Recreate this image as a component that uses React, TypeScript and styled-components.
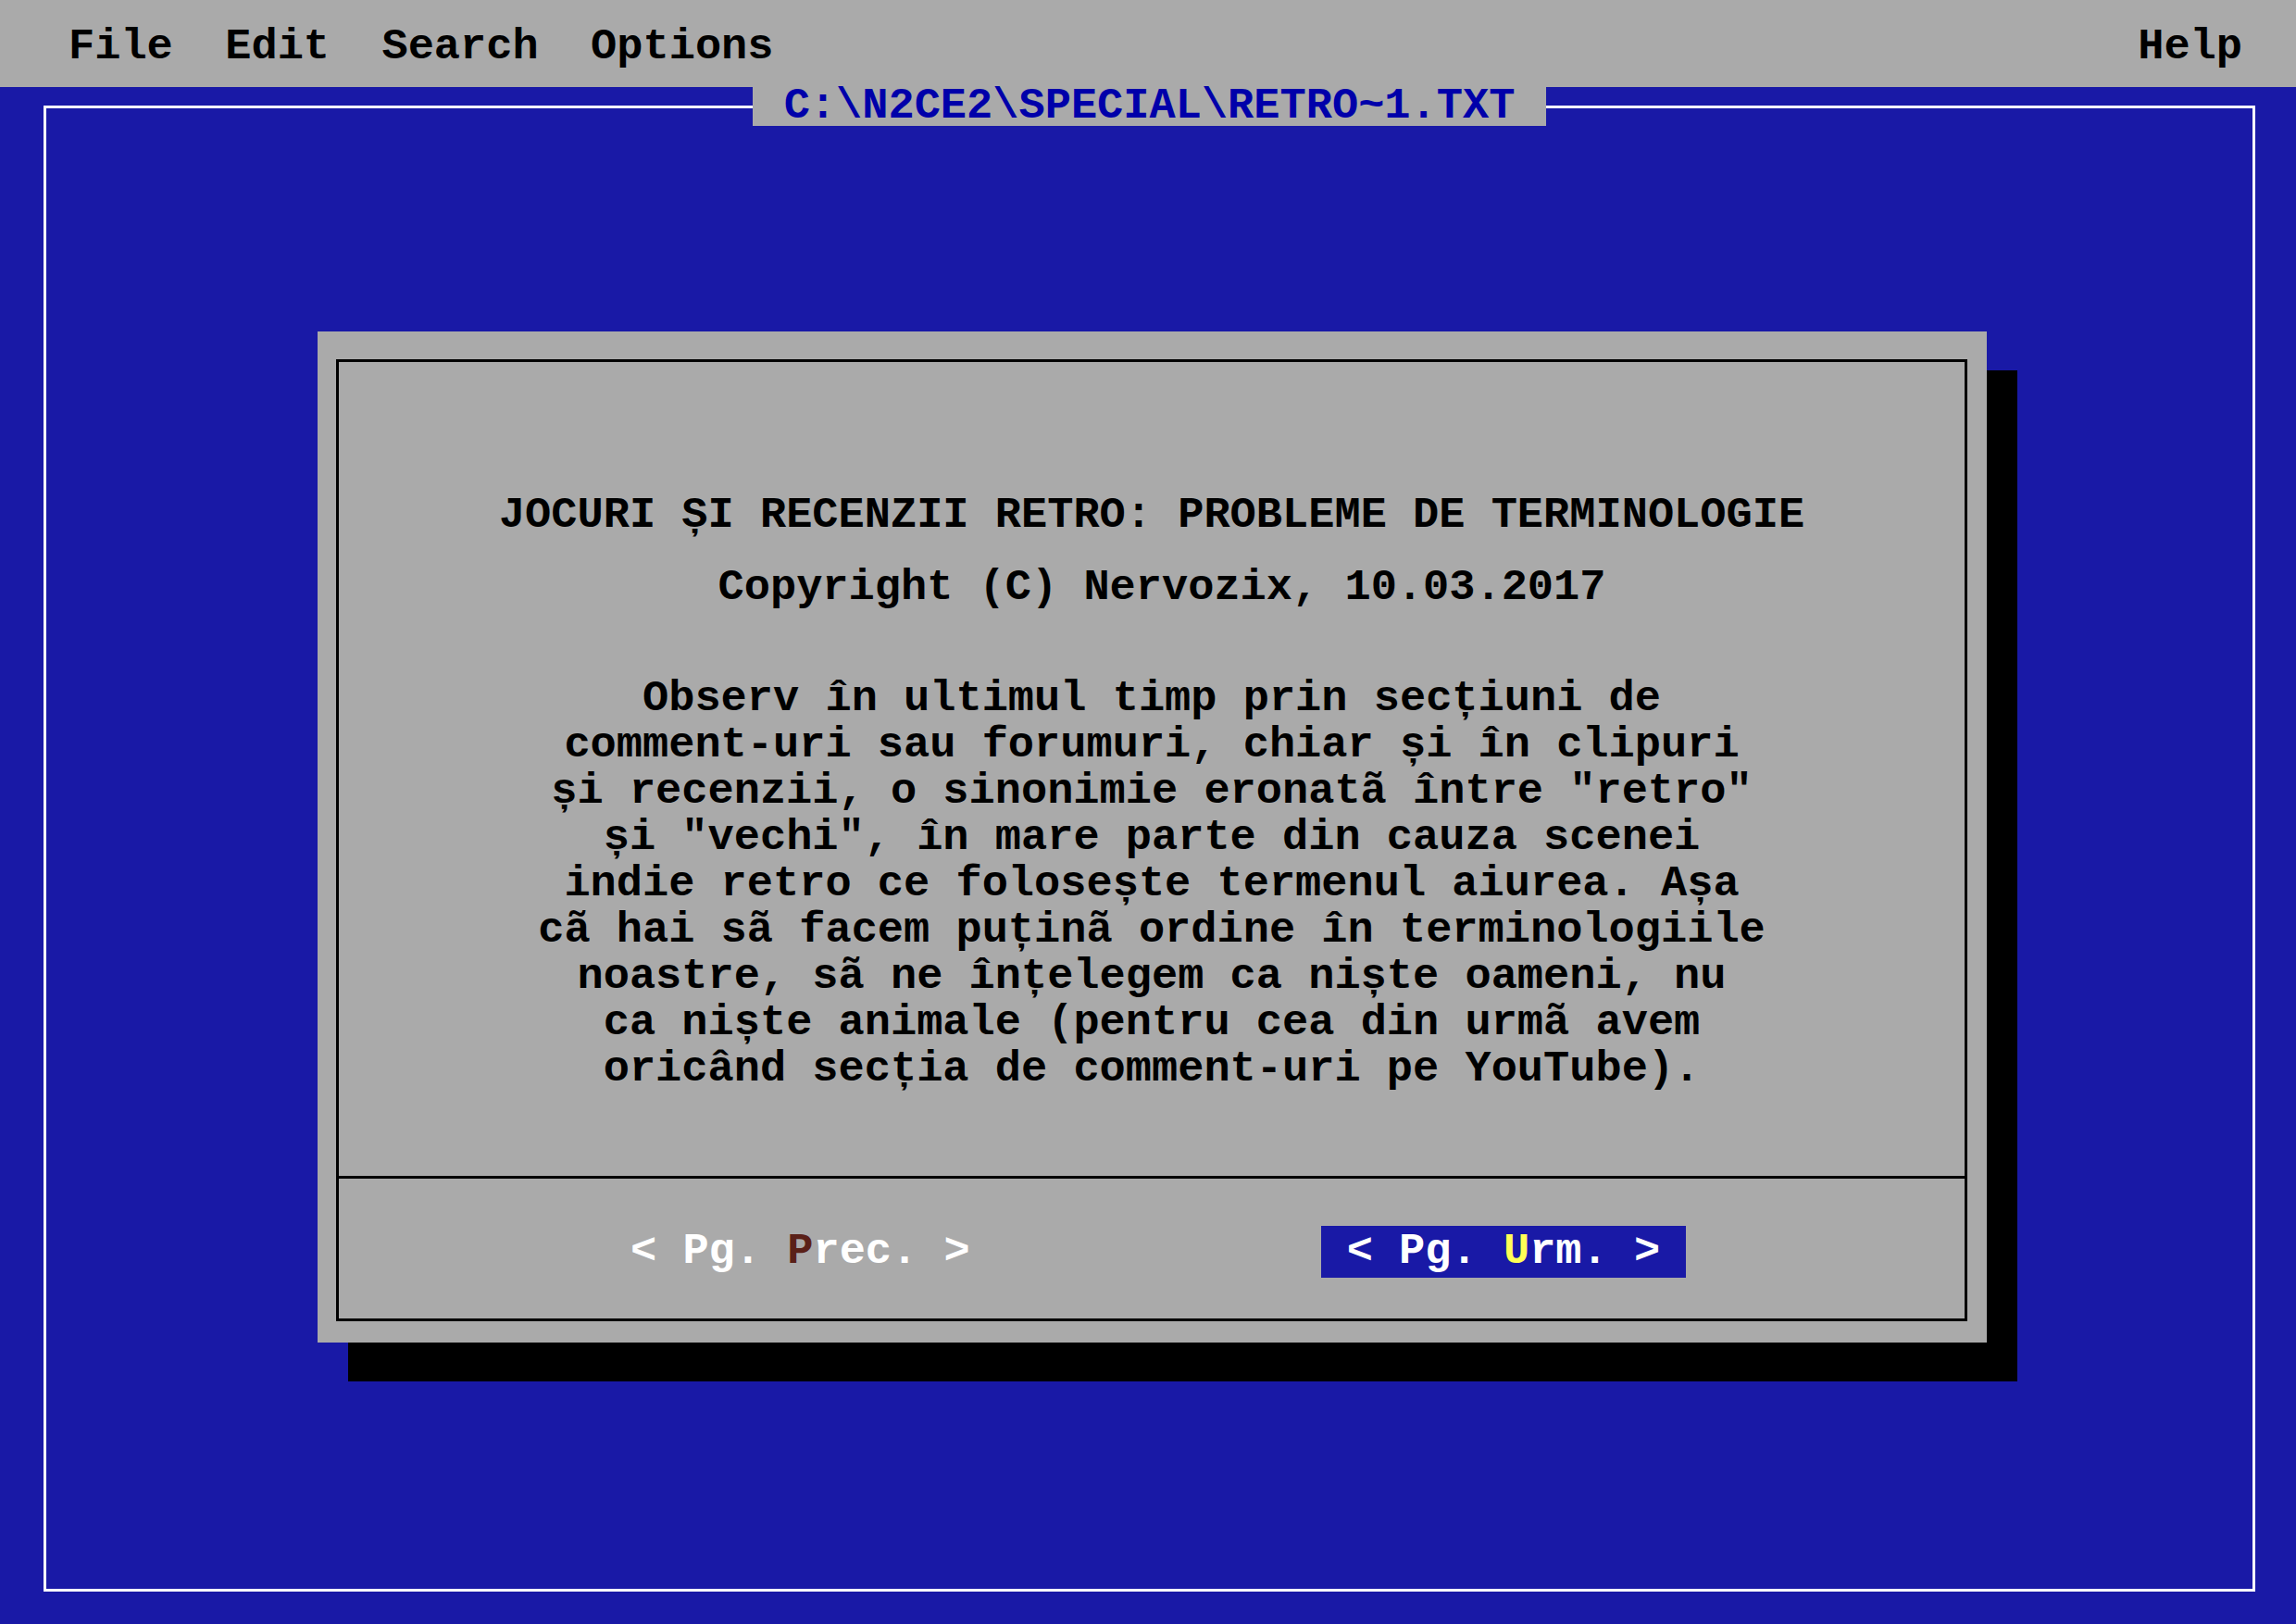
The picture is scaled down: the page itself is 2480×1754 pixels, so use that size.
import styled, { createGlobalStyle } from "styled-components";

const GlobalStyle = createGlobalStyle`
  html, body {
    margin: 0;
    padding: 0;
    background: #1919a6;
  }
`;

const Screen = styled.div`
  width: 2480px;
  height: 1754px;
  display: flex;
  flex-direction: column;
  background: #1919a6;
  overflow: hidden;
  font-family: "Liberation Mono", "DejaVu Sans Mono", monospace;
  font-size: 47px;
  font-weight: bold;
`;

const MenuBar = styled.nav`
  flex: none;
  height: 94px;
  box-sizing: border-box;
  display: flex;
  align-items: center;
  gap: 56.4px;
  padding: 6px 58px 0 74px;
  background: #aaaaaa;
  color: #000;
`;

const MenuItem = styled.span<{ $right?: boolean }>`
  line-height: 47px;
  white-space: pre;
  ${(p) => (p.$right ? "margin-left: auto;" : "")}
`;

const Desktop = styled.main`
  flex: 1;
  display: flex;
  padding: 20px 44px 35px 47px;
`;

const Frame = styled.section`
  flex: 1;
  display: flex;
  flex-direction: column;
  align-items: flex-start;
  border: 3px solid #fff;
`;

const FileTab = styled.div`
  align-self: center;
  margin-top: -24px;
  height: 43px;
  line-height: 43px;
  padding: 0 34px;
  background: #aaaaaa;
  color: #0000aa;
  white-space: pre;
`;

const Dialog = styled.div`
  margin: 222px 0 0 293px;
  width: 1803px;
  height: 1092px;
  box-sizing: border-box;
  display: flex;
  padding: 30px 21px 23px 20px;
  background: #aaaaaa;
  box-shadow: 33px 42px 0 #000;
`;

const DialogInner = styled.div`
  flex: 1;
  display: flex;
  flex-direction: column;
  border: 3px solid #000;
`;

const Body = styled.div`
  flex: none;
  height: 882px;
  box-sizing: border-box;
  padding-top: 141px;
  border-bottom: 3px solid #000;
  color: #000;
  text-align: center;
  line-height: 50px;
`;

const Heading = styled.div<{ $shift?: number; $gap?: number }>`
  white-space: pre;
  margin-top: ${(p) => p.$gap ?? 0}px;
  padding-left: ${(p) => p.$shift ?? 0}px;
`;

const Paragraph = styled.div`
  margin-top: 70px;
`;

const Line = styled.div`
  white-space: pre;
`;

const ButtonRow = styled.div`
  flex: 1;
  display: flex;
  align-items: flex-start;
  gap: 351px;
  padding: 51px 0 0 287px;
`;

const NavButton = styled.div<{ $active?: boolean }>`
  height: 56px;
  line-height: 56px;
  padding: 0 28px;
  white-space: pre;
  color: #fff;
  background: ${(p) => (p.$active ? "#1919a6" : "transparent")};
`;

const HotKey = styled.span<{ $color: string }>`
  color: ${(p) => p.$color};
`;

const lines = [
  "Observ în ultimul timp prin secțiuni de",
  "comment-uri sau forumuri, chiar și în clipuri",
  'și recenzii, o sinonimie eronatã între "retro"',
  'și "vechi", în mare parte din cauza scenei',
  "indie retro ce folosește termenul aiurea. Așa",
  "cã hai sã facem puținã ordine în terminologiile",
  "noastre, sã ne înțelegem ca niște oameni, nu",
  "ca niște animale (pentru cea din urmã avem",
  "oricând secția de comment-uri pe YouTube).",
];

export default function App() {
  return (
    <>
      <GlobalStyle />
      <Screen>
        <MenuBar>
          <MenuItem>File</MenuItem>
          <MenuItem>Edit</MenuItem>
          <MenuItem>Search</MenuItem>
          <MenuItem>Options</MenuItem>
          <MenuItem $right>Help</MenuItem>
        </MenuBar>
        <Desktop>
          <Frame>
            <FileTab>C:\N2CE2\SPECIAL\RETRO~1.TXT</FileTab>
            <Dialog>
              <DialogInner>
                <Body>
                  <Heading>JOCURI ȘI RECENZII RETRO: PROBLEME DE TERMINOLOGIE</Heading>
                  <Heading $gap={28} $shift={22}>
                    Copyright (C) Nervozix, 10.03.2017
                  </Heading>
                  <Paragraph>
                    {lines.map((l) => (
                      <Line key={l}>{l}</Line>
                    ))}
                  </Paragraph>
                </Body>
                <ButtonRow>
                  <NavButton>
                    {"< Pg. "}
                    <HotKey $color="#5a2018">P</HotKey>
                    {"rec. >"}
                  </NavButton>
                  <NavButton $active>
                    {"< Pg. "}
                    <HotKey $color="#ffff55">U</HotKey>
                    {"rm. >"}
                  </NavButton>
                </ButtonRow>
              </DialogInner>
            </Dialog>
          </Frame>
        </Desktop>
      </Screen>
    </>
  );
}
